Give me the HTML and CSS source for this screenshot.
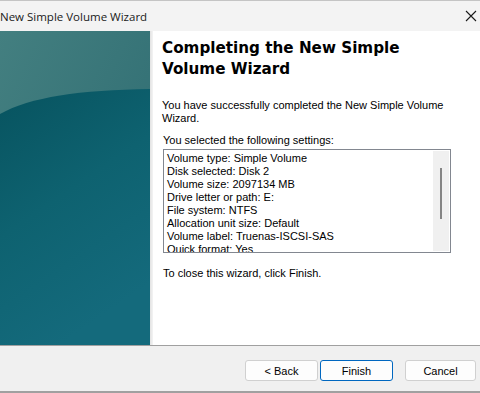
FILE: index.html
```html
<!DOCTYPE html>
<html lang="en">
  <head>
    <meta charset="UTF-8" />
    <title>New Simple Volume Wizard</title>
    <link rel="stylesheet" href="styles.css">
  </head>
  <body>
    <div class="window">
      <div class="titlebar">
        <span class="title">New Simple Volume Wizard</span>
        <svg class="close" width="12" height="12" viewBox="0 0 12 12">
          <path d="M1 1 L11 11 M11 1 L1 11" stroke="#1a1a1a" stroke-width="1.1" fill="none" />
        </svg>
      </div>

      <div class="main">
        <div class="side">
          <svg width="150" height="314" viewBox="0 0 150 314" preserveAspectRatio="none">
            <defs>
              <linearGradient id="top" x1="0" y1="0" x2="1" y2="1">
                <stop offset="0" stop-color="#437f80" />
                <stop offset="1" stop-color="#2c6a70" />
              </linearGradient>
              <linearGradient id="low" x1="0" y1="0" x2="0.4" y2="1">
                <stop offset="0" stop-color="#07535f" />
                <stop offset="0.5" stop-color="#0e6270" />
                <stop offset="1" stop-color="#146a7c" />
              </linearGradient>
            </defs>
            <rect width="150" height="314" fill="url(#top)" />
            <path d="M0 83 C30 66 80 59 150 58 L150 314 L0 314 Z" fill="url(#low)" />
          </svg>
        </div>
        <div class="strip"></div>

        <div class="content">
          <h1>Completing the New Simple Volume Wizard</h1>
          <p class="intro">You have successfully completed the New Simple Volume Wizard.</p>
          <p class="label">You selected the following settings:</p>
          <div class="settings">
            <div class="lines">
              <div>Volume type: Simple Volume</div>
              <div>Disk selected: Disk 2</div>
              <div>Volume size: 2097134 MB</div>
              <div>Drive letter or path: E:</div>
              <div>File system: NTFS</div>
              <div>Allocation unit size: Default</div>
              <div>Volume label: Truenas-ISCSI-SAS</div>
              <div>Quick format: Yes</div>
            </div>
            <div class="scrollbar"><div class="thumb"></div></div>
          </div>
          <p class="close-note">To close this wizard, click Finish.</p>
        </div>
      </div>

      <div class="footer">
        <button class="button">&lt; Back</button>
        <button class="button primary">Finish</button>
        <button class="button cancel">Cancel</button>
      </div>
    </div>
  </body>
</html>
```

FILE: styles.css
```css
body {
  margin: 0;
  font-family: "Liberation Sans", Arial, sans-serif;
  font-size: 11px;
  color: #000;
  background: #f0f0f0;
}
.window {
  width: 480px;
  height: 393px;
  overflow: hidden;
  display: flex;
  flex-direction: column;
}
.titlebar {
  height: 30px;
  border-top: 1px solid #c4c4c4;
  background-color: #f3f3f3;
  display: flex;
  align-items: center;
  justify-content: space-between;
  padding-right: 3px;
}
.title {
  font-family: "Open Sans", "Noto Sans", sans-serif;
  font-size: 11.5px;
  color: #1a1a1a;
  margin-top: 1px;
}
.main {
  height: 314px;
  display: flex;
  background-color: #fff;
}
.side {
  width: 150px;
  height: 314px;
}
.side svg {
  display: block;
}
.strip {
  width: 3px;
  background: linear-gradient(to right, #e2e2e2, #f4f4f4);
}
.content {
  flex: 1;
  padding: 7px 0 0 9px;
}
h1 {
  font-family: "DejaVu Sans", Verdana, sans-serif;
  font-weight: bold;
  font-size: 15.2px;
  line-height: 21px;
  width: 255px;
  margin: 0;
  color: #000;
}
p {
  margin: 0;
  line-height: 13px;
}
.intro {
  margin-top: 19px;
  width: 290px;
}
.label {
  margin-top: 9px;
  padding-left: 1px;
}
.settings {
  width: 286px;
  height: 102px;
  margin: 2px 0 0 1px;
  border: 1px solid #828790;
  display: flex;
  overflow: hidden;
}
.lines {
  flex: 1;
  padding: 2px 0 0 3px;
  line-height: 13px;
  overflow: hidden;
}
.scrollbar {
  width: 16px;
  margin: 1px 1px 1px 0;
  background-color: #f0f0f0;
  display: flex;
  justify-content: center;
  padding-top: 17px;
}
.thumb {
  width: 2px;
  height: 51px;
  background-color: #858585;
}
.close-note {
  margin-top: 14px;
  padding-left: 1px;
}
.footer {
  border-top: 1px solid #a0a0a0;
  border-bottom: 2px solid #a0a0a0;
  background-color: #f0f0f0;
  display: flex;
  align-items: flex-start;
  padding: 14px 4px 0 245px;
  box-sizing: border-box;
  height: 48px;
}
.button {
  width: 73px;
  height: 21px;
  font-family: "Liberation Sans", Arial, sans-serif;
  font-size: 11px;
  color: #000;
  background-color: #fdfdfd;
  border: 1px solid #d0d0d0;
  border-radius: 3px;
  padding: 0;
  margin-right: 2px;
}
.button.primary {
  border-color: #0067c0;
}
.button.cancel {
  width: 71px;
  margin-left: 10px;
  margin-right: 0;
}
```
